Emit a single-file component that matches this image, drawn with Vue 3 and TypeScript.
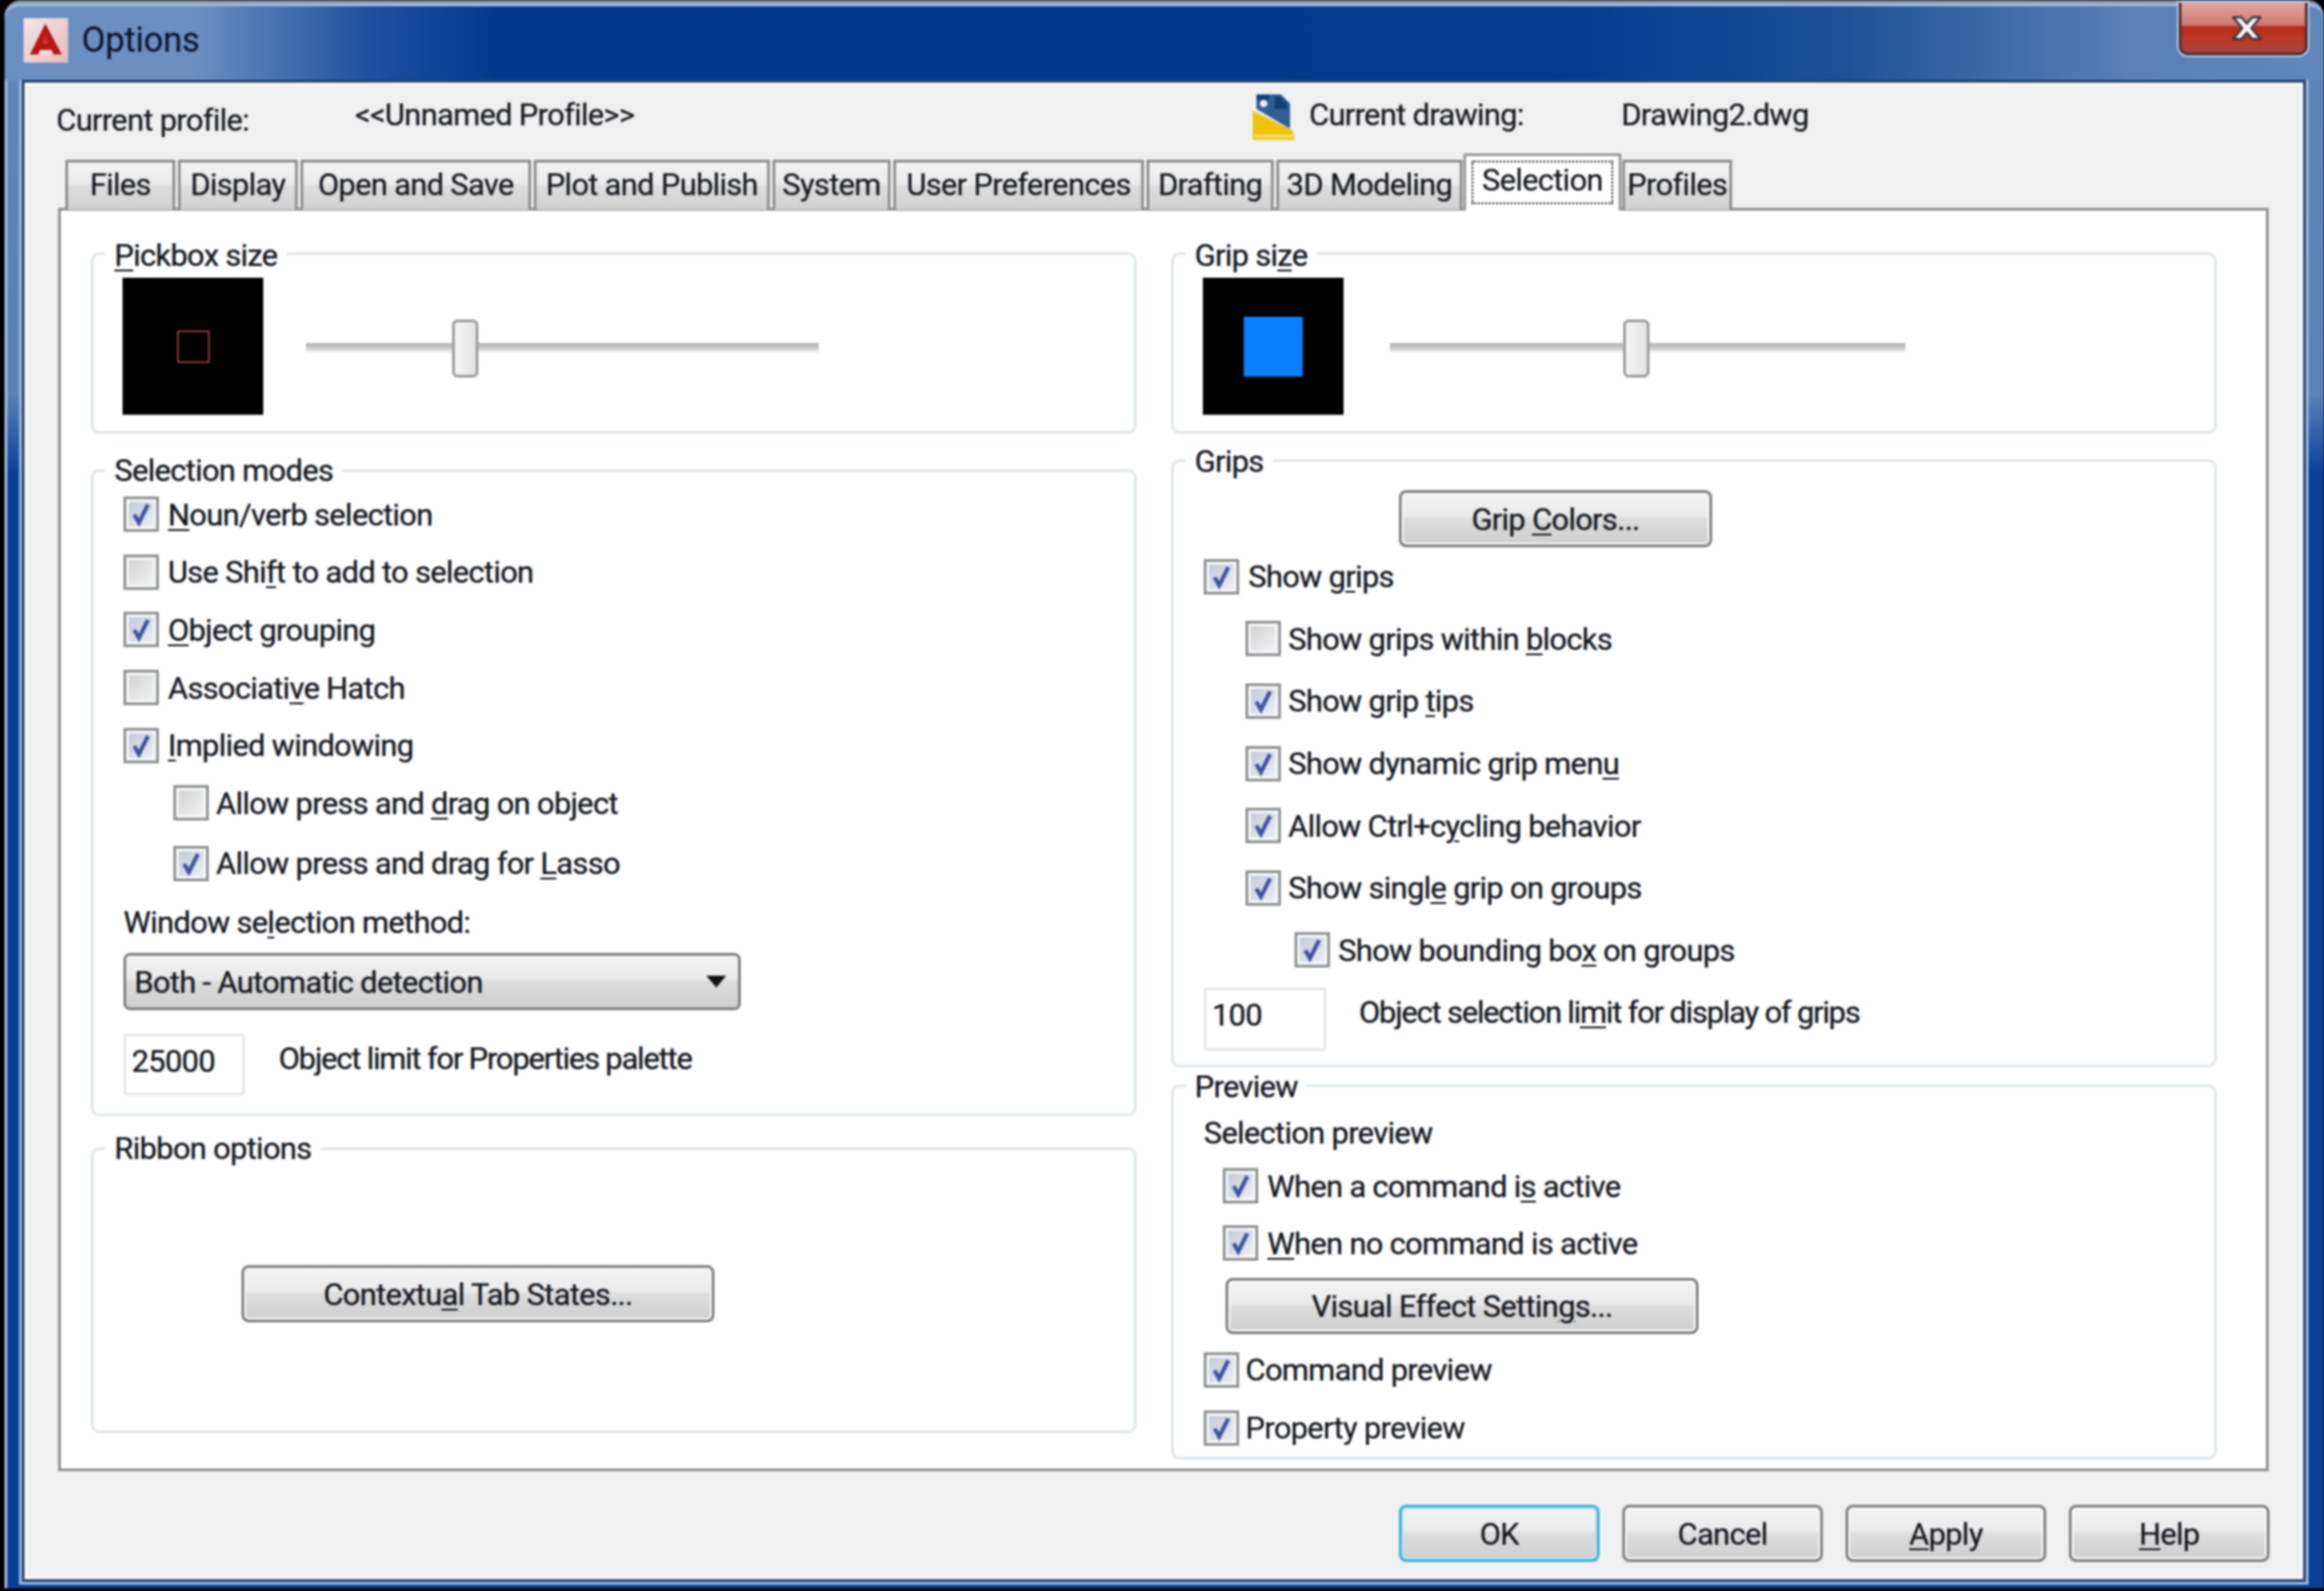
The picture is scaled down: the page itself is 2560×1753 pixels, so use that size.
<script setup lang="ts">
interface Check { pre: string; u: string; post: string; on: boolean; level: number }
const c = (pre: string, u: string, post: string, on: boolean, level = 0): Check => ({ pre, u, post, on, level })

const tabs = [
  { t: 'Files', w: 121 }, { t: 'Display', w: 132 }, { t: 'Open and Save', w: 254 }, { t: 'Plot and Publish', w: 260 },
  { t: 'System', w: 130 }, { t: 'User Preferences', w: 276 }, { t: 'Drafting', w: 140 }, { t: '3D Modeling', w: 205 },
  { t: 'Selection', w: 174, active: true }, { t: 'Profiles', w: 121 },
]
const modes = [
  c('', 'N', 'oun/verb selection', true), c('Use Shi', 'f', 't to add to selection', false),
  c('', 'O', 'bject grouping', true), c('Associati', 'v', 'e Hatch', false), c('', 'I', 'mplied windowing', true),
  c('Allow press and ', 'd', 'rag on object', false, 1), c('Allow press and drag for ', 'L', 'asso', true, 1),
]
const grips = [
  c('Show g', 'r', 'ips', true), c('Show grips within ', 'b', 'locks', false, 1), c('Show grip ', 't', 'ips', true, 1),
  c('Show dynamic grip men', 'u', '', true, 1), c('Allow Ctrl+c', 'y', 'cling behavior', true, 1),
  c('Show singl', 'e', ' grip on groups', true, 1), c('Show bounding bo', 'x', ' on groups', true, 2),
]
const sel = [c('When a command i', 's', ' active', true), c('', 'W', 'hen no command is active', true)]
const prev = [c('Command preview', '', '', true), c('Property preview', '', '', true)]
const footer = [
  { pre: '', u: '', post: 'OK', def: true }, { pre: '', u: '', post: 'Cancel', def: false },
  { pre: '', u: 'A', post: 'pply', def: false }, { pre: '', u: 'H', post: 'elp', def: false },
]
</script>

<template>
  <div class="window">
    <div class="frame">
      <div class="title">
        <svg class="logo" viewBox="0 0 49 49">
          <defs><linearGradient id="lg" x1="0" y1="0" x2="1" y2="1"><stop offset="0" stop-color="#f3e6e6"/><stop offset="1" stop-color="#e9b9b9"/></linearGradient></defs>
          <rect width="49" height="49" fill="url(#lg)"/>
          <path d="M24 6 L42 40 L33 40 L31 35 L18 35 L16 40 L7 40 Z" fill="#b51515"/>
          <path d="M24 19 L28 28 L20 28 Z" fill="#d83030"/>
          <rect x="19" y="35" width="11" height="7" fill="#ead9d9"/>
        </svg>
        <span class="title-text">Options</span>
        <div class="close">
          <svg viewBox="0 0 36 32" class="x"><path d="M3 4 H12 L18 11 L24 4 H33 L23 16 L33 28 H24 L18 21 L12 28 H3 L13 16 Z" fill="#f6f6f8" stroke="#3b3140" stroke-width="2.4" stroke-linejoin="round"/></svg>
        </div>
      </div>

      <div class="client">
        <div class="head">
          <span class="lbl-profile">Current profile:</span>
          <span class="val-profile">&lt;&lt;Unnamed Profile&gt;&gt;</span>
          <svg class="dwg" viewBox="0 0 46 50">
            <path d="M4 0 H31 L41 10 V38 L4 16 Z" fill="#2f5f96"/>
            <path d="M4 0 H18 V6 H4 Z M24 2 H30 L38 10 V16 H24 Z" fill="#153f78"/>
            <circle cx="12" cy="10" r="4" fill="#e8eef8"/>
            <path d="M0 18 L44 40 L46 50 H0 Z" fill="#eec20e"/>
            <path d="M2 44 H44 V48 H2 Z" fill="#f7dc62"/>
          </svg>
          <span class="lbl-drawing">Current drawing:</span>
          <span class="val-drawing">Drawing2.dwg</span>
        </div>

        <div class="tabs">
          <div v-for="t in tabs" :key="t.t" class="tab" :class="{ active: t.active }" :style="{ width: t.w + 'px' }">
            <span :class="{ focus: t.active }">{{ t.t }}</span>
          </div>
        </div>

        <div class="panel">
          <div class="col">
            <section class="group g-size">
              <div class="legend"><u>P</u>ickbox size</div>
              <div class="size-row">
                <div class="swatch"><i class="pick"></i></div>
                <div class="slider"><b class="thumb th-left"></b></div>
              </div>
            </section>

            <section class="group g-modes">
              <div class="legend">Selection modes</div>
              <div class="inner">
                <div class="rows-modes">
                  <label v-for="r in modes" :key="r.post" class="check row-m" :class="'lv' + r.level">
                    <span class="box" :class="{ off: !r.on }"><svg v-if="r.on" viewBox="0 0 33 33"><path d="M9 17 L14 26 L24 6" fill="none" stroke="#3f52a3" stroke-width="4.5"/></svg></span>
                    <span>{{ r.pre }}<u>{{ r.u }}</u>{{ r.post }}</span>
                  </label>
                </div>
                <div class="plain wsm">Window se<u>l</u>ection method:</div>
                <div class="combo"><span>Both - Automatic detection</span><i class="arrow"></i></div>
                <div class="limit limit-l">
                  <div class="field">25000</div>
                  <span class="limit-text">Ob<u>j</u>ect limit for Properties palette</span>
                </div>
              </div>
            </section>

            <section class="group g-ribbon">
              <div class="legend">Ribbon options</div>
              <button class="btn btn-ctx">Contextu<u>a</u>l Tab States...</button>
            </section>
          </div>

          <div class="col">
            <section class="group g-size">
              <div class="legend">Grip si<u>z</u>e</div>
              <div class="size-row">
                <div class="swatch"><i class="grip"></i></div>
                <div class="slider slider-r"><b class="thumb th-right"></b></div>
              </div>
            </section>

            <section class="group g-grips">
              <div class="legend">Grips</div>
              <button class="btn btn-grip">Grip <u>C</u>olors...</button>
              <div class="inner inner-g">
                <label v-for="r in grips" :key="r.pre" class="check row-g" :class="'gl' + r.level">
                  <span class="box" :class="{ off: !r.on }"><svg v-if="r.on" viewBox="0 0 33 33"><path d="M9 17 L14 26 L24 6" fill="none" stroke="#3f52a3" stroke-width="4.5"/></svg></span>
                  <span>{{ r.pre }}<u>{{ r.u }}</u>{{ r.post }}</span>
                </label>
                <div class="limit limit-r">
                  <div class="field f-100">100</div>
                  <span class="limit-text lt-r">Object selection li<u>m</u>it for display of grips</span>
                </div>
              </div>
            </section>

            <section class="group g-preview">
              <div class="legend">Preview</div>
              <div class="inner">
                <div class="plain selprev">Selection preview</div>
                <div class="sel-rows">
                  <label v-for="r in sel" :key="r.post" class="check row-p">
                    <span class="box"><svg viewBox="0 0 33 33"><path d="M9 17 L14 26 L24 6" fill="none" stroke="#3f52a3" stroke-width="4.5"/></svg></span>
                    <span>{{ r.pre }}<u>{{ r.u }}</u>{{ r.post }}</span>
                  </label>
                </div>
                <button class="btn btn-fx">Visual Effect Settin<u>g</u>s...</button>
                <div class="prev-rows">
                  <label v-for="r in prev" :key="r.pre" class="check row-v">
                    <span class="box"><svg viewBox="0 0 33 33"><path d="M9 17 L14 26 L24 6" fill="none" stroke="#3f52a3" stroke-width="4.5"/></svg></span>
                    <span>{{ r.pre }}</span>
                  </label>
                </div>
              </div>
            </section>
          </div>
        </div>

        <div class="footer">
          <button v-for="b in footer" :key="b.post" class="btn btn-foot" :class="{ def: b.def }"><u>{{ b.u }}</u>{{ b.post }}</button>
        </div>
      </div>
    </div>
  </div>
</template>

<style>
html, body { margin: 0; background: #000; }
</style>

<style scoped>
.window {
  width: 2560px; height: 1753px; box-sizing: border-box; padding-left: 5px; background: #000; overflow: hidden;
  font-family: Roboto, "Noto Sans", sans-serif; font-size: 34px; letter-spacing: -0.75px; color: #14161c;
  text-shadow: 0 0 1px rgba(20, 22, 40, .5);
}
.frame {
  height: 1750px; box-sizing: border-box; padding: 0 20px 0 19px; border-radius: 18px 18px 0 0;
  border-top: 3px solid #7d8794;
  background: linear-gradient(180deg, #5f86bc 0, #5a82ba 430px, #0a3f99 520px, #0a3f99 100%);
  box-shadow: inset 3px 3px 0 #a9c2e4; filter: blur(0.8px);
}
.title {
  height: 85px; margin: 0 -20px 0 -19px; padding-left: 21px; display: flex; align-items: center; position: relative;
  border-top: 4px solid #9db7dc; box-sizing: border-box; border-radius: 18px 18px 0 0;
  background: linear-gradient(90deg, #6c8fc1 0, #6b8fc0 210px, #1e519f 400px, #03398c 540px, #023a8c 1700px, #1b5098 2020px, #5a80b6 2340px, #6088bc 100%);
}
.logo { width: 49px; height: 49px; margin-top: -6px; }
.title-text { margin-left: 15px; margin-top: -8px; color: #0a1630; font-size: 38px; letter-spacing: -0.2px; }
.close {
  position: absolute; right: 18px; top: -4px; width: 142px; height: 58px; box-sizing: border-box;
  border: 3px solid #4f2d2f; border-top: 0; border-radius: 0 0 10px 10px; box-shadow: 0 0 0 2px #b6cbe8;
  background: linear-gradient(180deg, #e2a6a1 0, #cf7b72 24px, #b42c19 27px, #b93a29 42px, #a8473e 100%);
  display: flex; align-items: center; justify-content: center;
}
.x { width: 38px; height: 32px; margin-left: 8px; }

.client {
  height: 1655px; box-sizing: border-box; border: 3px solid #2a4069; background: #f0f0f0;
  box-shadow: 0 0 0 3px #9db9df, inset 0 0 0 3px #fafafa;
}
.head { height: 85px; display: flex; position: relative; }
.head span { line-height: 40px; }
.lbl-profile { margin: 21px 0 0 35px; width: 329px; }
.val-profile { margin: 15px 0 0 0; width: 989px; }
.lbl-drawing { margin: 15px 0 0 16px; width: 344px; }
.val-drawing { margin: 15px 0 0 0; }
.dwg { width: 46px; height: 50px; margin-top: 13px; }

.tabs { height: 55px; display: flex; padding-left: 45px; gap: 3px; position: relative; z-index: 1; }
.tab {
  height: 55px; box-sizing: border-box; text-align: center; line-height: 48px; border: 3px solid #8d8d8d; border-bottom: 0;
  background: linear-gradient(180deg, #f3f3f3 0, #ebebeb 45%, #dedede 50%, #d0d0d0 100%);
}
.tab.active {
  height: 63px; margin: -7px -2px 0; background: #fff; line-height: 38px; padding: 5px 6px 0; border-color: #999;
}
.focus { display: block; height: 48px; border: 2px dotted #222; box-sizing: border-box; }

.panel {
  height: 1392px; margin: -2px 38px 0 37px; box-sizing: border-box; border: 3px solid #8f8f8f; background: #fff;
  padding: 46px 0 0 33px; display: flex; gap: 38px;
}
.col { width: 1152px; display: flex; flex-direction: column; }
.group { box-sizing: border-box; border: 3px solid #dfe6ea; border-radius: 9px; }
.legend { width: fit-content; height: 40px; line-height: 40px; margin: -21px 0 0 13px; padding: 0 10px; background: #fff; }
.g-size { height: 200px; }
.g-size .legend { margin-top: -20px; }
.g-modes { height: 713px; margin-top: 39px; }
.g-modes .legend, .g-ribbon .legend { margin-top: -22px; }
.g-ribbon { height: 315px; margin-top: 34px; }
.g-grips { height: 670px; margin-top: 28px; }
.g-preview { height: 413px; margin-top: 19px; }

.size-row { display: flex; align-items: center; margin: 5px 0 0 32px; }
.swatch { width: 155px; height: 151px; background: #000; display: flex; align-items: center; justify-content: center; }
.pick { width: 36px; height: 36px; box-sizing: border-box; border: 2px solid #8a3a3a; }
.grip { width: 65px; height: 66px; background: #0a80ff; }
.slider {
  width: 565px; height: 10px; margin: 2px 0 0 47px; position: relative;
  background: linear-gradient(180deg, #b0b0b0 0, #c4c4c4 40%, #ededed 100%);
}
.slider-r { width: 568px; margin-left: 51px; }
.thumb {
  position: absolute; top: -26px; width: 29px; height: 64px; box-sizing: border-box; border: 3px solid #9b9b9b; border-radius: 6px;
  background: linear-gradient(90deg, #f5f5f5, #e4e4e4);
}
.th-left { left: 161px; }
.th-right { left: 257px; }

.inner { padding-left: 33px; }
.inner-g { margin-top: -2px; }
.check { display: flex; align-items: center; gap: 10px; }
.box {
  width: 39px; height: 39px; flex: none; box-sizing: border-box; border: 3px solid #8f9090;
  background: linear-gradient(135deg, #bfc6d6, #f0f2f6);
  box-shadow: inset 0 0 0 3px #f6f7f9;
}
.box.off { background: linear-gradient(135deg, #cfcfcf, #f6f6f6); }
.box svg { display: block; width: 33px; height: 33px; }

.rows-modes { margin-top: -3px; }
.row-m { height: 63.6px; }
.row-m:last-child { margin-top: 3px; }
.lv1 { padding-left: 55px; gap: 8px; }
.plain { height: 40px; line-height: 40px; }
.wsm { margin-top: 13px; }
.combo {
  width: 680px; height: 63px; margin-top: 14px; box-sizing: border-box; border: 3px solid #7d7d7d; border-radius: 7px;
  display: flex; align-items: center; justify-content: space-between; padding: 0 13px 0 9px;
  background: linear-gradient(180deg, #f3f3f3 0, #eaeaea 45%, #dcdcdc 50%, #cfcfcf 100%);
}
.arrow { width: 0; height: 0; border: 11px solid transparent; border-top: 13px solid #111; border-bottom: 0; }
.limit { display: flex; align-items: flex-start; }
.limit-l { margin-top: 26px; }
.field {
  width: 134px; height: 68px; box-sizing: border-box; border: 3px solid #e4e7ea; border-radius: 4px; padding-left: 6px; line-height: 54px;
}
.limit-text { margin-left: 37px; line-height: 54px; letter-spacing: -1.3px; }
.f-100 { height: 70px; width: 135px; }
.limit-r { margin-top: 7px; }
.lt-r { margin-left: 36px; }

.btn {
  box-sizing: border-box; border: 3px solid #7f7f7f; border-radius: 8px; padding: 0; display: block; text-align: center;
  font: inherit; letter-spacing: inherit; color: inherit; text-shadow: inherit; box-shadow: inset 0 0 0 2px #fbfbfb;
  background: linear-gradient(180deg, #f3f3f3 0, #ebebeb 45%, #dddddd 50%, #cfcfcf 100%);
}
.btn-ctx { width: 521px; height: 63px; margin: 109px 0 0 163px; }
.btn-grip { width: 345px; height: 63px; margin: 12px 0 0 248px; }
.btn-fx { width: 521px; height: 62px; margin: 7px 0 0 24px; }
.row-g { height: 68.6px; }
.gl1 { padding-left: 46px; gap: 8px; }
.gl2 { padding-left: 100px; gap: 9px; }
.selprev { margin-top: 11px; }
.sel-rows { margin-top: 7px; }
.row-p { height: 63px; padding-left: 21px; gap: 10px; }
.prev-rows { margin-top: 7px; }
.row-v { height: 64px; gap: 7px; }

.footer { display: flex; justify-content: flex-end; gap: 25px; margin: 37px 37px 0 0; }
.btn-foot { width: 221px; height: 63px; }
.def { border-color: #3aaedb; box-shadow: inset 0 0 0 2px #bfe6f7; }
u { text-underline-offset: 4px; text-decoration-thickness: 2px; }
</style>
